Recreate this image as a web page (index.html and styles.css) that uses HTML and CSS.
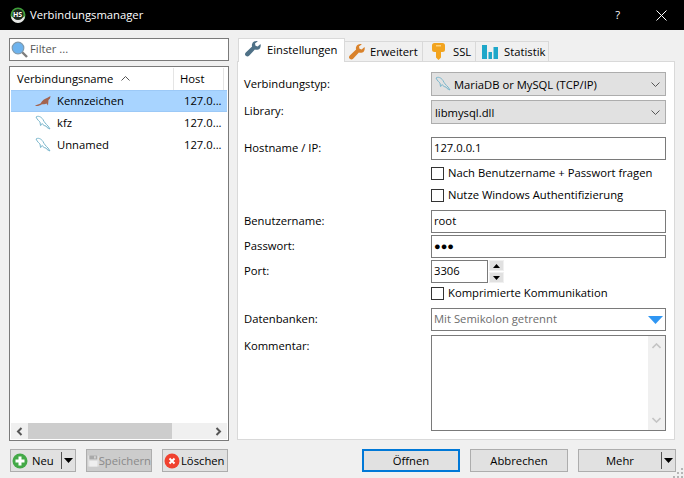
FILE: index.html
```html
<!DOCTYPE html>
<html lang="de">

<head>
    <meta charset="UTF-8">
    <title>Verbindungsmanager</title>
    <link rel="stylesheet" href="styles.css">
</head>

<body>
    <svg class="defs" width="0" height="0">
        <symbol id="dolphin" viewBox="0 0 16 16">
            <path d="M1 2C3 .5 6 1.500 8 4.500c1 2.500 3 4.500 5 6.500l2 3-3-1.500-1-1.500c-1.500 0-3-1-3.800-2.500-.5 1-.7 1.700-1.700 2L5 7C4 6 2.500 5 1 2z" fill="none" stroke="#79b6cc" stroke-width="1"/>
        </symbol>
        <symbol id="wrench" viewBox="0 0 16 16">
            <path d="M15.500 3l-2.800 2.500-2.200-.7-.5-2.200L12.800.2C10.500-.4 8 .6 7.200 2.700c-.4 1-.4 2-.1 2.900L.8 11.500c-1.100 1.100-1.100 2.400 0 3.300 1 1 2.300 1 3.300 0l5.800-6.200c1.800.6 3.700.2 4.900-1.200 1-1.200 1.200-2.900.7-4.400z"/>
        </symbol>
        <symbol id="caret" viewBox="0 0 9 5">
            <path d="M0 0h9L4.500 5z"/>
        </symbol>
    </svg>

    <div class="titlebar">
        <svg class="app-icon" width="16" height="16" viewBox="0 0 16 16">
            <circle cx="8" cy="8" r="7.500" fill="#3f9e3a"/>
            <path d="M1 9a7 7 0 0 0 14 0c-2 3-12 3-14 0z" fill="#e6e6e6"/>
            <circle cx="8" cy="7.500" r="5.500" fill="#1e2a1e"/>
        </svg>
        <span class="app-mark">HS</span>
        <span class="title">Verbindungsmanager</span>
        <span class="help">?</span>
        <svg class="close" width="11" height="11" viewBox="0 0 11 11">
            <path d="M.5.500l10 10M10.500.500l-10 10" stroke="#fff" stroke-width="1" fill="none"/>
        </svg>
    </div>

    <div class="main">
        <div class="left">
            <div class="filter">
                <svg width="17" height="17" viewBox="0 0 17 17">
                    <path d="M11 11l5 5" stroke="#7d7d7d" stroke-width="2.400"/>
                    <circle cx="7" cy="7" r="5.800" fill="#6db3ee" stroke="#7f99ad" stroke-width="1.200"/>
                </svg>
                <span>Filter ...</span>
            </div>

            <div class="list">
                <div class="list-head">
                    <div class="col-name">Verbindungsname
                        <svg width="9" height="5" viewBox="0 0 9 5">
                            <path d="M.5 4.500l4-4 4 4" fill="none" stroke="#555"/>
                        </svg>
                    </div>
                    <div class="col-host">Host</div>
                </div>
                <div class="list-row selected">
                    <svg class="seal" width="16" height="12" viewBox="0 0 16 12">
                        <path d="M0 10.500c2-1 4-1 5.500-2C7 5.500 10 3.500 12 3l3.500-2-.5 2.500L13.500 5l-.5 5.500-1.500-2c-1.500 1-3.500.5-5 1-2.500 1.500-4.500 2-6.500 1z" fill="#a3634f"/>
                    </svg>
                    <span class="row-name">Kennzeichen</span>
                    <span class="row-addr">127.0...</span>
                </div>
                <div class="list-row">
                    <svg class="row-icon"><use href="#dolphin"/></svg>
                    <span class="row-name">kfz</span>
                    <span class="row-addr">127.0...</span>
                </div>
                <div class="list-row">
                    <svg class="row-icon"><use href="#dolphin"/></svg>
                    <span class="row-name">Unnamed</span>
                    <span class="row-addr">127.0...</span>
                </div>
                <div class="hscroll">
                    <svg width="7" height="9" viewBox="0 0 7 9"><path d="M5.500 1L2 4.500 5.500 8" fill="none" stroke="#555" stroke-width="2"/></svg>
                    <div class="hscroll-track"><div class="hscroll-thumb"></div></div>
                    <svg width="7" height="9" viewBox="0 0 7 9"><path d="M1.500 1L5 4.500 1.500 8" fill="none" stroke="#555" stroke-width="2"/></svg>
                </div>
            </div>
        </div>

        <div class="right">
            <div class="tabs">
                <div class="tab active">
                    <svg class="tab-icon steel"><use href="#wrench"/></svg>
                    Einstellungen
                </div>
                <div class="tab tab-adv">
                    <svg class="tab-icon copper"><use href="#wrench"/></svg>
                    Erweitert
                </div>
                <div class="tab tab-ssl">
                    <svg width="13" height="17" viewBox="0 0 13 17">
                        <path d="M2.500 0h8A2.500 2.500 0 0 1 13 2.500v4A2.500 2.500 0 0 1 10.500 9H9v5.500L6.500 17 4 14.500V9H2.500A2.500 2.500 0 0 1 0 6.500v-4A2.500 2.500 0 0 1 2.500 0z" fill="#f2a41f"/>
                        <path d="M4 2h5v1.500H4z" fill="#ffd27a"/>
                    </svg>
                    SSL
                </div>
                <div class="tab tab-stat">
                    <svg width="16" height="14" viewBox="0 0 16 14">
                        <path d="M0 0h5v14H0zM6.500 7h3.500v7H6.500zM11.500 2H16v12h-4.500z" fill="#1ea7c9"/>
                    </svg>
                    Statistik
                </div>
            </div>

            <div class="panel">
                <div class="form-row row-select">
                    <label>Verbindungstyp:</label>
                    <div class="select">
                        <svg class="row-icon"><use href="#dolphin"/></svg>
                        <span>MariaDB or MySQL (TCP/IP)</span>
                        <svg class="chevron" width="9" height="5" viewBox="0 0 9 5"><path d="M.5.500l4 4 4-4" fill="none" stroke="#555"/></svg>
                    </div>
                </div>
                <div class="form-row row-library">
                    <label>Library:</label>
                    <div class="select">
                        <span>libmysql.dll</span>
                        <svg class="chevron" width="9" height="5" viewBox="0 0 9 5"><path d="M.5.500l4 4 4-4" fill="none" stroke="#555"/></svg>
                    </div>
                </div>
                <div class="form-row row-host">
                    <label>Hostname / IP:</label>
                    <div class="input">127.0.0.1</div>
                </div>
                <div class="form-row row-check1">
                    <label></label>
                    <div class="check"><i></i>Nach Benutzername + Passwort fragen</div>
                </div>
                <div class="form-row row-check2">
                    <label></label>
                    <div class="check"><i></i>Nutze Windows Authentifizierung</div>
                </div>
                <div class="form-row row-user">
                    <label>Benutzername:</label>
                    <div class="input">root</div>
                </div>
                <div class="form-row row-pass">
                    <label>Passwort:</label>
                    <div class="input dots">●●●</div>
                </div>
                <div class="form-row row-port">
                    <label>Port:</label>
                    <div class="input port">3306</div>
                    <div class="spin">
                        <div><svg class="caret-up" width="7" height="4"><use href="#caret"/></svg></div>
                        <div><svg width="7" height="4"><use href="#caret"/></svg></div>
                    </div>
                </div>
                <div class="form-row row-check3">
                    <label></label>
                    <div class="check"><i></i>Komprimierte Kommunikation</div>
                </div>
                <div class="form-row row-db">
                    <label>Datenbanken:</label>
                    <div class="input db">
                        <span>Mit Semikolon getrennt</span>
                        <svg width="15" height="8" viewBox="0 0 15 8"><path d="M0 0h15L7.500 8z" fill="#2f96f3"/></svg>
                    </div>
                </div>
                <div class="form-row row-comment">
                    <label>Kommentar:</label>
                    <div class="input comment">
                        <div class="vscroll">
                            <svg width="9" height="6" viewBox="0 0 9 6"><path d="M.5 5l4-4 4 4" fill="none" stroke="#c4c4c4" stroke-width="1.600"/></svg>
                            <svg width="9" height="6" viewBox="0 0 9 6"><path d="M.5 1l4 4 4-4" fill="none" stroke="#c4c4c4" stroke-width="1.600"/></svg>
                        </div>
                    </div>
                </div>
            </div>
        </div>
    </div>

    <div class="footer">
        <div class="footer-left">
            <div class="btn btn-new">
                <svg width="16" height="16" viewBox="0 0 16 16">
                    <circle cx="8" cy="8" r="7.500" fill="#43a947"/>
                    <path d="M6.500 3.500h3v3h3v3h-3v3h-3v-3h-3v-3h3z" fill="#fff"/>
                </svg>
                <span>Neu</span>
                <div class="split"><b></b><svg width="9" height="5"><use href="#caret"/></svg></div>
            </div>
            <div class="btn btn-save">
                <svg width="16" height="16" viewBox="0 0 16 16">
                    <path d="M1 1h13l1 1v13H1z" fill="#dedede"/>
                    <path d="M3 1h10v5H3z" fill="#a9a9a9"/>
                    <path d="M9 2h2v3H9z" fill="#dcdcdc"/>
                    <path d="M3 8h10v7H3z" fill="#efefef"/>
                </svg>
                <span>Speichern</span>
            </div>
            <div class="btn btn-del">
                <svg width="16" height="16" viewBox="0 0 16 16">
                    <circle cx="8" cy="8" r="7.500" fill="#f0412f"/>
                    <path d="M5.500 5.500l5 5M10.500 5.500l-5 5" stroke="#fff" stroke-width="2"/>
                </svg>
                <span>Löschen</span>
            </div>
        </div>
        <div class="footer-right">
            <div class="btn btn-open">Öffnen</div>
            <div class="btn btn-cancel">Abbrechen</div>
            <div class="btn btn-more">
                <span>Mehr</span>
                <div class="split"><b></b><svg width="9" height="5"><use href="#caret"/></svg></div>
            </div>
        </div>
    </div>

    <svg class="grip" width="11" height="11" viewBox="0 0 11 11">
        <path d="M8 1h2v2H8zM4 5h2v2H4zM8 5h2v2H8zM0 9h2v2H0zM4 9h2v2H4zM8 9h2v2H8z" fill="#b5b5b5"/>
    </svg>
</body>

</html>
```

FILE: styles.css
```css
body {
    margin: 0;
    width: 684px;
    height: 478px;
    overflow: hidden;
    background-color: #f0f0f0;
    font-family: "Open Sans", "Noto Sans", sans-serif;
    font-size: 11.25px;
    color: #000;
    position: relative;
}

.defs {
    position: absolute;
}

.grip {
    position: absolute;
    right: 0;
    bottom: 0;
}

.titlebar {
    display: flex;
    align-items: center;
    height: 30px;
    padding-left: 10px;
    background-color: #000;
    color: #fff;
    position: relative;
}

.app-mark {
    position: absolute;
    left: 13px;
    top: 10px;
    font-size: 7px;
    font-weight: bold;
    line-height: 9px;
}

.title {
    margin-left: 4px;
    padding-bottom: 2px;
    flex: 1;
}

.help {
    margin-right: 36px;
    padding-bottom: 2px;
}

.close {
    margin-right: 17px;
}

.main {
    display: flex;
    height: 411px;
}

.left {
    width: 220px;
    margin: 8px 0 0 9px;
}

.filter {
    display: flex;
    align-items: center;
    gap: 2px;
    height: 19px;
    padding: 1px;
    border: 1px solid #7a7a7a;
    background-color: #fff;
    color: #555;
}

.filter span {
    padding-bottom: 2px;
}

.list {
    margin-top: 5px;
    height: 371px;
    border: 1px solid #7a7a7a;
    background-color: #fff;
    padding: 1px;
    position: relative;
}

.list-head {
    display: flex;
    height: 22px;
    line-height: 22px;
}

.col-name {
    width: 163px;
    padding-left: 6px;
    box-sizing: border-box;
    border-right: 1px solid #e5e5e5;
}

.col-name svg {
    margin-left: 5px;
    vertical-align: 2px;
}

.col-host {
    width: 50px;
    padding-left: 6px;
    box-sizing: border-box;
    border-right: 1px solid #e5e5e5;
}

.list-row {
    display: flex;
    align-items: center;
    height: 22px;
}

.list-row.selected {
    background-color: #a8d4ff;
    border: 1px solid #9cc9f7;
    border-width: 1px 0;
    box-sizing: border-box;
}

.row-icon {
    width: 16px;
    height: 16px;
    flex: none;
}

.list-row .row-icon,
.seal {
    margin-left: 24px;
}

.row-name {
    margin-left: 6px;
    width: 127px;
    padding-bottom: 2px;
}

.row-addr {
    padding-bottom: 2px;
}

.hscroll {
    position: absolute;
    left: 1px;
    right: 1px;
    bottom: 1px;
    height: 16px;
    display: flex;
    align-items: center;
    justify-content: space-between;
    background-color: #f0f0f0;
    padding: 0 5px;
}

.hscroll-track {
    flex: 1;
    height: 100%;
    margin: 0 5px;
}

.hscroll-thumb {
    width: 144px;
    height: 100%;
    background-color: #cdcdcd;
}

.right {
    margin: 8px 0 0 8px;
    width: 438px;
}

.tabs {
    display: flex;
    align-items: flex-end;
    height: 23px;
    margin-left: 1px;
    position: relative;
}

.tab {
    display: flex;
    align-items: center;
    gap: 5px;
    box-sizing: border-box;
    height: 20px;
    padding-left: 4px;
    background-color: #f0f0f0;
    border: 1px solid #d9d9d9;
    border-bottom: none;
    margin-left: -1px;
}

.tab.active {
    width: 107px;
    height: 24px;
    margin-left: 0;
    margin-bottom: -1px;
    padding: 0 0 3px 6px;
    gap: 6px;
    background-color: #fff;
    position: relative;
    z-index: 1;
}

.tab-adv {
    width: 79px;
}

.tab-ssl {
    width: 54px;
    padding-left: 9px;
    gap: 8px;
}

.tab-stat {
    width: 74px;
    padding-left: 6px;
    gap: 6px;
}

.tab-icon {
    width: 16px;
    height: 16px;
}

.steel {
    fill: #4f7187;
}

.copper {
    fill: #d9822b;
}

.panel {
    box-sizing: border-box;
    height: 379px;
    padding: 10px 8px 0 6px;
    background-color: #fff;
    border: 1px solid #d9d9d9;
}

.form-row {
    display: flex;
}

.form-row label {
    width: 187px;
    flex: none;
    line-height: 22px;
}

.row-select label {
    line-height: 24px;
}

.select {
    display: flex;
    align-items: center;
    gap: 5px;
    flex: 1;
    box-sizing: border-box;
    height: 24px;
    padding: 0 5px 0 3px;
    border: 1px solid #adadad;
    background-color: #e1e1e1;
}

.select .row-icon {
    margin-right: -2px;
}

.select span {
    flex: 1;
}

.chevron {
    flex: none;
}

.input {
    flex: 1;
    box-sizing: border-box;
    height: 23px;
    padding: 0 2px;
    line-height: 20px;
    border: 1px solid #7a7a7a;
    background-color: #fff;
}

.row-library {
    margin-top: 4px;
}

.row-host {
    margin-top: 13px;
}

.check {
    display: flex;
    align-items: flex-start;
    gap: 4px;
    height: 16px;
    line-height: 13px;
}

.check i {
    box-sizing: border-box;
    width: 13px;
    height: 13px;
    margin-top: 1px;
    border: 1px solid #333;
    background-color: #fff;
}

.row-check1 {
    margin-top: 6px;
}

.row-check2 {
    margin-top: 6px;
}

.row-user {
    margin-top: 6px;
}

.row-pass {
    margin-top: 2px;
}

.dots {
    font-size: 11px;
}

.row-port {
    margin-top: 2px;
}

.port {
    flex: none;
    width: 57px;
}

.spin {
    margin-left: 1px;
    width: 15px;
    display: flex;
    flex-direction: column;
    gap: 1px;
}

.spin div {
    display: flex;
    align-items: center;
    justify-content: center;
    height: 11px;
    background-color: #e1e1e1;
    border: 1px solid #f0f0f0;
    box-sizing: border-box;
}

.caret-up {
    transform: rotate(180deg);
}

.row-check3 {
    margin-top: 3px;
}

.row-db {
    margin-top: 6px;
}

.db {
    display: flex;
    align-items: center;
    justify-content: space-between;
    color: #6d6d6d;
    padding-right: 2px;
}

.db span {
    padding-bottom: 2px;
}

.row-comment {
    margin-top: 4px;
}

.comment {
    height: 96px;
    padding: 0;
    position: relative;
}

.vscroll {
    position: absolute;
    top: 0;
    right: 0;
    bottom: 0;
    width: 17px;
    display: flex;
    flex-direction: column;
    justify-content: space-between;
    align-items: center;
    padding: 7px 0;
    box-sizing: border-box;
    background-color: #f0f0f0;
}

.footer {
    display: flex;
    justify-content: space-between;
    padding: 8px 0 0 10px;
}

.footer-left,
.footer-right {
    display: flex;
}

.btn {
    display: flex;
    align-items: center;
    justify-content: center;
    box-sizing: border-box;
    height: 23px;
    background-color: #e1e1e1;
    border: 1px solid #adadad;
}

.btn-new {
    width: 66px;
    justify-content: flex-start;
    padding-left: 1px;
}

.btn-new span {
    margin-left: 4px;
}

.split {
    display: flex;
    align-items: center;
    gap: 2px;
    margin-left: auto;
    margin-right: 2px;
    height: 100%;
}

.split b {
    width: 1px;
    height: 17px;
    background-color: #555;
}

.btn-save {
    width: 66px;
    margin-left: 10px;
    justify-content: flex-start;
    padding-left: 0;
    background-color: #cccccc;
    color: #8a8a8a;
    white-space: nowrap;
}

.btn-save span {
    margin-left: -1px;
}

.btn-del {
    width: 66px;
    margin-left: 10px;
    justify-content: flex-start;
    padding-left: 1px;
}

.btn-del span {
    margin-left: 1px;
}

.btn-open {
    width: 98px;
    border: 2px solid #0078d7;
}

.btn-cancel {
    width: 98px;
    margin-left: 10px;
}

.btn-more {
    width: 98px;
    margin-left: 10px;
    margin-right: 8px;
    justify-content: flex-start;
}

.btn-more span {
    margin-left: 27px;
}
```
